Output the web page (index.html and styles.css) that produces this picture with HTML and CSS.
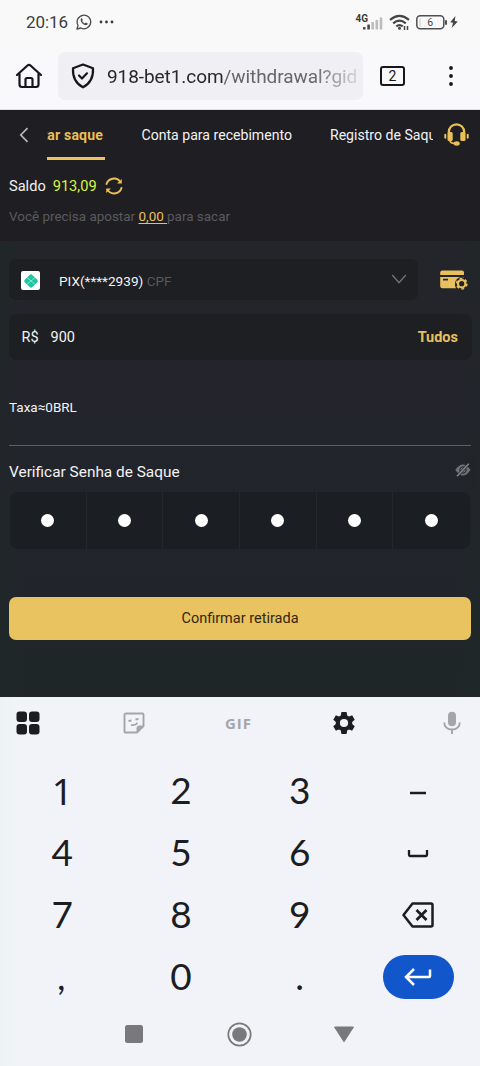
FILE: index.html
```html
<!DOCTYPE html>
<html lang="pt-BR">
<head>
<meta charset="utf-8">
<meta name="viewport" content="width=device-width, initial-scale=1">
<title>Saque</title>
<link rel="stylesheet" href="styles.css">
</head>
<body>
<div class="phone">
  <header class="browser">
    <div class="status">
      <span class="clock">20:16</span>
      <svg class="whatsapp" width="16" height="16" viewBox="0 0 16 16" fill="none" stroke="#4b4b4d" stroke-width="1.3"><path d="M1 15l1-3.7A6.8 6.8 0 1 1 4.8 14z" stroke-linejoin="round"/><path d="M5 4.6c.5-.6 1-.5 1.3.2l.5 1.1-.6 1c.6 1.200 1.400 2 2.700 2.500l1-.9 1.500.8c.5.3.3 1-.2 1.500C8.600 12.800 3.200 7.600 5 4.600z" fill="#4b4b4d" stroke="none"/></svg>
      <svg class="more" width="15" height="4" viewBox="0 0 15 4" fill="#3a3a3c"><circle cx="2" cy="2" r="1.4"/><circle cx="7.500" cy="2" r="1.400"/><circle cx="13" cy="2" r="1.400"/></svg>
      <div class="signals">
        <span class="net">4G</span>
        <svg class="bars" width="20" height="13" viewBox="0 0 20 13"><g fill="#47474a"><rect x="0" y="10" width="2.500" height="2.500" rx=".5"/><rect x="4.300" y="7.500" width="2.600" height="5" rx=".5"/></g><g fill="#bcbcbe"><rect x="8.400" y="5" width="2.600" height="7.500" rx=".5"/><rect x="12.500" y="3" width="2.600" height="9.500" rx=".5"/><rect x="16.700" y=".5" width="2.600" height="12" rx=".5"/></g></svg>
        <svg class="wifi" width="22" height="17" viewBox="0 0 22 17" fill="none" stroke="#454548" stroke-width="2.200"><path d="M1 5.800Q10.500-2.200 20 5.800M4.200 9.300Q10.500 4 16.800 9.300M7.300 12.300Q10.500 9.800 13.700 12.300"/><circle cx="10.500" cy="14.300" r="1.500" fill="#454548" stroke="none"/><path d="M15.500 12v4M18.500 12v4" stroke-width="1.500"/></svg>
        <svg class="battery" width="32" height="15" viewBox="0 0 32 15"><rect x=".8" y=".8" width="27" height="13" rx="3.500" fill="none" stroke="#505052" stroke-width="1.500"/><path d="M4 3.500v8" stroke="#c9c9c4" stroke-width="1"/><rect x="29" y="5" width="2" height="5" rx="1" fill="#505052"/><text x="14.300" y="11.300" text-anchor="middle" class="battery-level">6</text></svg>
        <svg class="bolt" width="8" height="12" viewBox="0 0 8 12" fill="#454548"><path d="M5.400 0L.2 6.200l2.800.5L1.700 12 7.800 5.400 4.800 4.900z"/></svg>
      </div>
    </div>
    <div class="toolbar">
      <svg class="home" width="28" height="26" viewBox="0 0 28 26" fill="none" stroke="#17171b" stroke-width="2.200" stroke-linecap="round" stroke-linejoin="round"><path d="M2 12L12.500 2.500Q14 1.300 15.500 2.500L26 12M4.500 10.500V21.500Q4.500 24 7 24H21Q23.500 24 23.500 21.500V10.500M10.500 24V16.500Q10.500 15 12 15H16Q17.500 15 17.500 16.500V24"/></svg>
      <div class="address">
        <svg width="24" height="26" viewBox="0 0 24 26" fill="none" stroke="#17171b" stroke-width="2.200" stroke-linecap="round" stroke-linejoin="round"><path d="M12 1.500L22 5.200Q22.800 18.500 12 24.300Q1.200 18.500 2 5.200z"/><path d="M8 12.500l3 3 5-5.200"/></svg>
        <span class="url"><span class="host">918-bet1.com</span>/withdrawal?gid</span>
      </div>
      <span class="tab-count">2</span>
      <svg class="menu" width="6" height="20" viewBox="0 0 6 20" fill="#17171b"><circle cx="3" cy="2" r="1.900"/><circle cx="3" cy="10" r="1.900"/><circle cx="3" cy="18" r="1.900"/></svg>
    </div>
  </header>

  <main class="site">
    <section class="top">
      <nav class="tabs">
        <svg class="back" width="10" height="16" viewBox="0 0 10 16" fill="none" stroke="#b5b5b8" stroke-width="1.700"><path d="M8.500 1.200L1.800 8l6.700 6.800"/></svg>
        <div class="tab-strip">
          <a class="tab active"><span>Solicitar saque</span></a>
          <a class="tab account">Conta para recebimento</a>
          <a class="tab history">Registro de Saque</a>
        </div>
        <svg class="support" width="25" height="24" viewBox="0 0 25 24"><path d="M4.800 10V9a7.700 7.700 0 0 1 15.400 0v1" fill="none" stroke="#e8bf58" stroke-width="2.200"/><path d="M6 17q0 3.500 5 3.500" fill="none" stroke="#e8bf58" stroke-width="1.800"/><g fill="#e8bf58"><rect x="3.500" y="9" width="5.200" height="9" rx="1.500"/><rect x="16.300" y="9" width="5.200" height="9" rx="1.500"/><rect x=".3" y="10.800" width="2" height="5" rx="1"/><rect x="22.700" y="10.800" width="2" height="5" rx="1"/><ellipse cx="12.700" cy="20.500" rx="3" ry="2.200"/></g></svg>
      </nav>
      <div class="balance">
        <span>Saldo</span><span class="amount">913,09</span>
        <svg width="18" height="18" viewBox="0 0 18 18" fill="none" stroke="#e8bf58" stroke-width="1.900"><path d="M1.300 7.800A7.800 7.800 0 0 1 15.500 5.200M16.700 10.200A7.800 7.800 0 0 1 2.500 12.800"/><path d="M12 6.500h4.800V2zM6 11.500H1.200V16z" fill="#e8bf58" stroke="none"/></svg>
      </div>
      <p class="wager">Você precisa apostar <a>0,00 </a>para sacar</p>
    </section>

    <section class="form">
      <div class="account-row">
        <div class="select">
          <span class="pix"><svg width="14" height="14" viewBox="0 0 14 14"><path d="M7 .3q.8 0 1.400.6l4.700 4.700q1.300 1.400 0 2.800l-4.700 4.700q-1.400 1.300-2.800 0L.9 8.400q-1.300-1.400 0-2.800L5.600.9Q6.200.3 7 .3z" fill="#20c6a0"/><path d="M2.800 3.400L7 7l4.200-3.600M2.800 10.600L7 7l4.200 3.600" fill="none" stroke="#a5ecd8" stroke-width=".8"/></svg></span>
          <span class="key">PIX(****2939) <em>CPF</em></span>
          <svg class="down" width="16" height="10" viewBox="0 0 16 10" fill="none" stroke="#707276" stroke-width="1.400"><path d="M1.200 1L8 8.700 14.800 1"/></svg>
        </div>
        <svg class="card" width="28" height="21" viewBox="0 0 28 21"><g fill="#e8c15e"><path d="M2.500.5H22q2 0 2 2V5H.2V2.500q0-2 2.300-2zM.2 7H24v3H17q-3 3-1 8.200H2.500q-2.300 0-2.300-2z"/></g><path d="M3 9.600h5" stroke="#24262a" stroke-width="1.700"/><circle cx="21.700" cy="13.700" r="6.800" fill="#212427"/><circle cx="21.700" cy="13.700" r="3.700" fill="none" stroke="#e8c15e" stroke-width="2.200"/><circle cx="21.700" cy="13.700" r="5.200" fill="none" stroke="#e8c15e" stroke-width="1.500" stroke-dasharray="2.700 2.745"/></svg>
      </div>
      <div class="value-row"><span class="currency">R$</span><span>900</span><b>Tudos</b></div>
      <p class="fee">Taxa≈0BRL</p>
      <div class="password-head">
        <span>Verificar Senha de Saque</span>
        <svg width="16" height="14" viewBox="0 0 16 14" fill="none"><path d="M.3 7Q7.700-4 15.500 7Q8 18 .3 7z" fill="#6e7177"/><circle cx="8" cy="7" r="3.200" stroke="#22252b" stroke-width="1"/><path d="M1.600 13.600L13.800.8" stroke="#22252b" stroke-width="2.800"/><path d="M2 13.200L13.800.8" stroke="#85888e" stroke-width="1.500"/></svg>
      </div>
      <div class="pin"><i></i><i></i><i></i><i></i><i></i><i></i></div>
      <button class="confirm">Confirmar retirada</button>
    </section>
  </main>

  <section class="keyboard">
    <div class="tools">
      <svg width="24" height="24" viewBox="0 0 24 24" fill="#1c1d22"><rect x=".5" y=".5" width="10.500" height="10.500" rx="3"/><rect x="13" y=".5" width="10.500" height="10.500" rx="3"/><rect x=".5" y="13" width="10.500" height="10.500" rx="3"/><rect x="13" y="13" width="10.500" height="10.500" rx="3"/></svg>
      <svg width="22" height="22" viewBox="0 0 22 22" fill="none" stroke="#a4a5aa" stroke-width="1.900"><path d="M3 1.500H19.500Q20.500 1.500 20.500 2.500V14L14 20.500H2.500Q1.500 20.500 1.500 19.500V2.500Q1.500 1.500 3 1.500z"/><path d="M20.500 14H16q-2 0-2 2v4.500z" fill="#a4a5aa" stroke-width="1"/><path d="M5.500 9l3-.5M12.500 7.500l3-.5M8 12.800q4.500 1 6.500-2" stroke-width="1.800"/></svg>
      <span class="gif">GIF</span>
      <svg class="gear" width="24" height="24" viewBox="1.500 1.500 21 21" fill="#1c1d22"><path d="M19.140 12.940c.04-.3.06-.61.06-.94 0-.32-.02-.64-.07-.94l2.030-1.580c.18-.14.23-.41.120-.61l-1.920-3.320c-.12-.22-.37-.29-.59-.22l-2.390.96c-.5-.38-1.030-.7-1.620-.94l-.36-2.540c-.04-.24-.24-.41-.48-.41h-3.840c-.24 0-.43.17-.47.41l-.36 2.540c-.59.24-1.130.57-1.620.94l-2.390-.96c-.22-.08-.47 0-.59.22L2.740 8.870c-.12.21-.08.47.12.61l2.030 1.580c-.05.3-.09.63-.09.94s.02.640.07.94l-2.030 1.580c-.18.14-.23.41-.12.61l1.920 3.320c.12.22.37.29.59.22l2.390-.96c.5.38 1.030.7 1.620.94l.36 2.540c.05.24.24.41.48.41h3.840c.24 0 .44-.17.47-.41l.36-2.540c.59-.24 1.130-.56 1.620-.94l2.390.96c.22.08.47 0 .59-.22l1.920-3.320c.12-.22.07-.47-.12-.61l-2.010-1.580zM12 15.600A3.600 3.600 0 1 1 12 8.400a3.600 3.600 0 0 1 0 7.200z"/></svg>
      <svg width="18" height="24" viewBox="0 0 18 24" fill="none"><rect x="5" y=".7" width="8" height="14.500" rx="4" fill="#a4a5aa"/><path d="M1.200 11.500q.5 7 7.800 7t7.800-7M9 18v5" stroke="#a4a5aa" stroke-width="1.900"/></svg>
    </div>
    <div class="keys">
      <span class="digit one">1</span><span class="digit">2</span><span class="digit">3</span>
      <span><svg class="dash" width="18" height="4" viewBox="0 0 18 4"><path d="M1 2h16" stroke="#1c1d22" stroke-width="2.500"/></svg></span>
      <span class="digit">4</span><span class="digit">5</span><span class="digit">6</span>
      <span><svg width="22" height="9" viewBox="0 0 22 9" fill="none" stroke="#1c1d22" stroke-width="2.300"><path d="M2 1v5q0 1 1 1h16q1 0 1-1V1"/></svg></span>
      <span class="digit">7</span><span class="digit">8</span><span class="digit">9</span>
      <span><svg width="32" height="26" viewBox="0 0 32 26" fill="none" stroke="#1c1d22" stroke-width="2.500" stroke-linejoin="round"><path d="M10.500 1.500H29Q30.500 1.500 30.500 3V23Q30.500 24.500 29 24.500H10.500L1.500 13z"/><path d="M14.500 8l10 10M24.500 8l-10 10" stroke-width="2.700"/></svg></span>
      <span class="digit comma">,</span><span class="digit">0</span><span class="digit">.</span>
      <span><span class="enter"><svg width="28" height="18" viewBox="0 0 28 18" fill="none" stroke="#fff" stroke-width="2.500"><path d="M10 1L2 9l8 8M2 9h23q1 0 1-1V1.500"/></svg></span></span>
    </div>
    <div class="system-nav">
      <svg width="18" height="18" viewBox="0 0 18 18"><rect width="18" height="18" rx="2.500" fill="#79797d"/></svg>
      <svg class="home-button" width="25" height="25" viewBox="0 0 25 25"><circle cx="12.500" cy="12.500" r="11.200" fill="none" stroke="#79797d" stroke-width="1.700"/><circle cx="12.500" cy="12.500" r="7.300" fill="#79797d"/></svg>
      <svg width="22" height="17" viewBox="0 0 22 17"><path d="M1.500 1h19L11 15.800z" fill="#79797d" stroke="#79797d" stroke-linejoin="round"/></svg>
    </div>
  </section>
</div>
</body>
</html>
```
FILE: styles.css
```css
* { box-sizing: border-box; }
body { margin: 0; font-family: Roboto, "Noto Sans", sans-serif; }
p { margin: 0; }
svg { display: block; flex: none; }

.phone { width: 480px; height: 1066px; overflow: hidden; display: flex; flex-direction: column; }

/* Browser chrome */
.browser { height: 110px; flex: none; background: linear-gradient(#f9f9f9 0 45px, #f9f9fc 55px); border-bottom: 1px solid #dedee2; }
.status { height: 44px; display: flex; align-items: center; padding: 0 22px 0 26px; color: #3d3d40; }
.clock { font-size: 17px; width: 50px; letter-spacing: -.1px; }
.more { margin-left: 7px; }
.signals { margin-left: auto; display: flex; align-items: center; }
.net { font-size: 10px; font-weight: 700; line-height: 10px; align-self: flex-start; }
.bars { margin: 2px 6px 0 -5px; }
.wifi { margin-right: 5px; }
.battery-level { font: 10.500px Roboto, sans-serif; fill: #47474a; }
.bolt { margin-left: 2px; }

.toolbar { height: 64px; display: flex; align-items: center; padding: 0 26px 0 15px; }
.address { display: flex; align-items: center; gap: 12px; width: 305px; height: 48px; margin-left: 15px; padding-left: 13px; border-radius: 7px; background: #f0eff4; }
.url { width: 252px; white-space: nowrap; font-size: 19px; letter-spacing: -.07px; color: #67666d; -webkit-mask-image: linear-gradient(90deg, #000 82%, rgba(0, 0, 0, .15)); mask-image: linear-gradient(90deg, #000 82%, rgba(0, 0, 0, .15)); }
.host { color: #28272d; }
.tab-count { width: 25px; height: 20px; margin-left: 17px; display: grid; place-items: center; border: 2px solid #17171b; border-radius: 3px; font-size: 14px; color: #17171b; }
.menu { margin-left: auto; }

/* Withdrawal page */
.site { height: 587px; flex: none; color: #f2f2f4; background: linear-gradient(90deg, rgba(30, 43, 39, .4), transparent 5% 95%, rgba(30, 43, 39, .25)), linear-gradient(#222529 130px, #23242c 290px, #21252b 480px, #1f2627 560px); }
.top { height: 131px; background: #1f1e22; }
.tabs { height: 50px; display: flex; align-items: center; padding: 0 11px 0 19px; }
.tab-strip { width: 386px; height: 50px; margin-left: 18px; display: flex; overflow: hidden; }
.tab { display: flex; align-items: center; flex: none; font-size: 14.100px; white-space: nowrap; }
.tab.active { width: 58px; justify-content: flex-end; overflow: hidden; padding-right: 2px; color: #e8bf58; font-weight: 700; border-bottom: 3px solid #edc260; padding-top: 3px; }
.active span { letter-spacing: .15px; }
.account { margin-left: 36.500px; }
.history { margin-left: 38px; }
.support { margin-left: auto; }
.balance { display: flex; align-items: center; height: 30px; padding: 1px 9px 0; margin-top: 10px; font-size: 14.600px; }
.amount { margin: 0 8px 0 7px; color: #daf542; }
.wager { margin-top: 9px; padding-left: 9px; line-height: 16px; font-size: 13.450px; color: #5a5a5e; white-space: pre; }
.wager a { color: #e8c15e; text-decoration: underline; text-underline-offset: 2px; }

.form { padding: 18px 9px 0; }
.account-row { display: flex; align-items: center; height: 41px; }
.select { display: flex; align-items: center; width: 409px; height: 41px; border-radius: 7px; background: #1d1f23; padding: 2px 11px 0 12px; }
.pix { width: 19px; height: 19px; border-radius: 2px; display: grid; place-items: center; background: #fff; }
.key { margin-left: 19px; font-size: 13.600px; }
.key em { font-style: normal; color: #56585d; }
.down { margin: -4px 0 0 auto; }
.card { margin: 2px 0 0 22px; }
.value-row { display: flex; align-items: center; height: 46px; margin: 14px -1px 0 0; padding: 0 14px 0 12.500px; border-radius: 8px; background: #1d1f23; font-size: 14.500px; }
.currency { width: 29px; }
.value-row b { margin-left: auto; color: #e8c15e; }
.fee { height: 86px; padding-top: 39px; line-height: 16px; font-size: 13.500px; border-bottom: 1px solid #5c5f67; }
.password-head { display: flex; align-items: center; justify-content: space-between; height: 45px; padding-top: 6px; font-size: 15.400px; }
.password-head svg { margin-top: -4px; }
.pin { display: grid; grid-template-columns: repeat(6, 1fr); height: 57px; margin: 1px 1px 0 1px; background: #1b1e22; border-radius: 8px; overflow: hidden; }
.pin i { display: grid; place-items: center; border-right: 1px solid #24272b; }
.pin i:last-child { border-color: transparent; }
.pin i::before { content: ""; width: 13px; height: 13px; border-radius: 50%; background: #fff; }
.confirm { display: block; width: 462px; height: 43px; margin-top: 48px; border: 0; border-radius: 7px; background: #e8c360; color: #35270f; font: 14.500px Roboto, sans-serif; }

/* Numeric keyboard */
.keyboard { flex: 1; background: linear-gradient(90deg, #edf4f5, #f1f3f8 18px); color: #1c1d22; }
.tools { height: 53px; padding: 0 19px 1px 16px; display: flex; align-items: center; justify-content: space-between; }
.gif { font: 700 15px "Open Sans", sans-serif; letter-spacing: .9px; color: #a4a5aa; margin-left: -3px; }
.gear { margin-right: 4px; margin-left: -3px; }
.keys { display: grid; grid-template-columns: repeat(4, 118.700px); grid-auto-rows: 62px; margin: 10px 0 0 3px; }
.keys > span { display: grid; place-items: center; }
.keys .digit { font: 37px Lato, sans-serif; padding-bottom: 3px; }
.keys .one { font-family: "Noto Sans", sans-serif; font-size: 37px; padding-bottom: 2px; }
.keys .comma { font-style: italic; }
.dash { margin-top: 4px; }
.enter { display: grid; place-items: center; width: 71px; height: 44px; border-radius: 22px; background: #1256cc; }
.system-nav { display: flex; align-items: center; justify-content: space-between; height: 50px; padding: 2px 125px 0; }
.home-button { margin-left: 2px; }
```
